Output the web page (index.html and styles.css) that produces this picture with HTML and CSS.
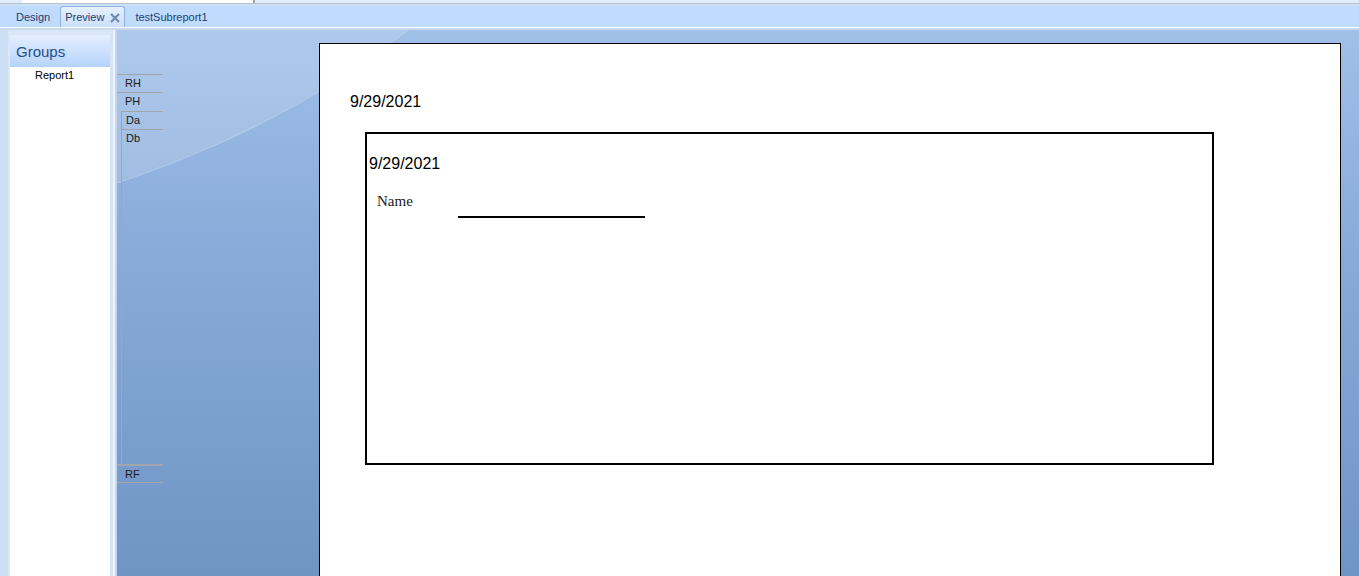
FILE: index.html
```html
<!DOCTYPE html>
<html lang="en">
  <head>
    <meta charset="UTF-8" />
    <title>Report Preview</title>
    <link rel="stylesheet" href="styles.css">
  </head>
  <body>
    <div class="topstrip">
      <div class="topstrip-tab"></div>
    </div>
    <div class="tabbar">
      <div class="tab">Design</div>
      <div class="tab active">
        Preview
        <svg class="tab-close" width="10" height="10" viewBox="0 0 10 10">
          <path d="M1 1 L9 9 M9 1 L1 9" stroke="#6a88b0" stroke-width="2" />
        </svg>
      </div>
      <div class="tab">testSubreport1</div>
    </div>

    <div class="main">
      <div class="gutter"></div>

      <!-- Groups panel -->
      <div class="groups">
        <div class="groups-header">Groups</div>
        <div class="groups-list">
          <div class="group-item">Report1</div>
        </div>
      </div>

      <div class="splitter"></div>

      <!-- Preview canvas -->
      <div class="canvas">
        <div class="swoosh"></div>

        <div class="ruler">
          <div class="band rh">RH</div>
          <div class="band ph">PH</div>
          <div class="band-group">
            <div class="band da">Da</div>
            <div class="band db">Db</div>
          </div>
          <div class="band rf">RF</div>
        </div>

        <div class="page">
          <div class="page-date">9/29/2021</div>
          <div class="subreport">
            <div class="sub-date">9/29/2021</div>
            <div class="field-row">
              <div class="field-label">Name</div>
              <div class="field-line"></div>
            </div>
          </div>
        </div>
      </div>
    </div>
  </body>
</html>
```

FILE: styles.css
```css
html,
body {
  margin: 0;
  height: 100%;
  overflow: hidden;
}

body {
  font-family: "Liberation Sans", Arial, sans-serif;
  background-color: #cddff4;
  display: flex;
  flex-direction: column;
}

/* Top strip */
.topstrip {
  height: 3px;
  background-color: #e2ecf8;
  border-bottom: 1px solid #b6c2d1;
  position: relative;
}

.topstrip-tab {
  position: absolute;
  left: 22px;
  top: 0;
  width: 231px;
  height: 3px;
  background-color: #ffffff;
  border-right: 2px solid #9aa6b6;
}

/* Tab bar */
.tabbar {
  height: 21px;
  margin-top: 2px;
  background-color: #bfdbfd;
  border-bottom: 1px solid #ffffff;
  display: flex;
  align-items: flex-end;
  padding-left: 8px;
  font-size: 11px;
  color: #1b3f76;
}

.tab {
  height: 20px;
  line-height: 20px;
  padding: 0 8px;
  margin-right: 2px;
}

.tab.active {
  display: flex;
  align-items: center;
  gap: 6px;
  padding: 0 4px 0 4px;
  height: 20px;
  background: linear-gradient(#e6f0fd, #cbe0fa);
  border: 1px solid #8fb3e0;
  border-bottom: none;
  border-radius: 3px 3px 0 0;
  margin-right: 2px;
  line-height: 19px;
}

.tab-close {
  margin-top: 1px;
}

/* Main area */
.main {
  flex: 1;
  display: flex;
  border-top: 2px solid #c9daee;
  min-height: 0;
}

.gutter {
  width: 8px;
  background-color: #cddff4;
  border-right: 2px solid #dbe7f6;
}

.groups {
  width: 100px;
  display: flex;
  flex-direction: column;
  padding-top: 5px;
  background-color: #dbe7f6;
}

.groups-header {
  height: 32px;
  background: linear-gradient(#e4efff, #b5d3fa);
  color: #1d4d8e;
  font-size: 15px;
  line-height: 34px;
  padding-left: 6px;
  box-sizing: border-box;
}

.groups-list {
  flex: 1;
  background-color: #ffffff;
  padding-top: 1px;
}

.group-item {
  font-size: 11px;
  padding-left: 25px;
  line-height: 14px;
  color: #000000;
}

.splitter {
  width: 7px;
  background: linear-gradient(90deg, #d6e4f7 0, #d6e4f7 3px, #eef4fc 3px, #eef4fc 5px, #c3d6ee 5px);
}

/* Canvas */
.canvas {
  flex: 1;
  position: relative;
  overflow: hidden;
  display: flex;
  align-items: flex-start;
  background: linear-gradient(#a0c0e8, #89abd9 40%, #6f95c5);
}

.swoosh {
  position: absolute;
  left: -1300px;
  top: -985px;
  width: 1800px;
  height: 1200px;
  border-radius: 50%;
  background-color: rgba(255, 255, 255, 0.15);
  border-bottom: 1px solid rgba(255, 255, 255, 0.25);
}

.ruler {
  position: relative;
  width: 46px;
  margin-top: 44px;
  font-size: 11px;
  color: #1a1a1a;
}

.band {
  border-top: 1px solid #a2a5ab;
  height: 17px;
  line-height: 17px;
  padding-left: 8px;
}

.ph {
  height: 18px;
}

.band-group {
  margin-left: 4px;
  border-left: 1px solid #a2a5ab;
}

.band-group .band {
  padding-left: 4px;
}

.db {
  height: 334px;
}

.rf {
  border-top: 2px solid #a2a5ab;
  border-bottom: 1px solid #a2a5ab;
  height: 16px;
}

/* Page */
.page {
  position: relative;
  margin-left: 156px;
  margin-top: 13px;
  width: 1022px;
  height: 560px;
  background-color: #ffffff;
  border: 1px solid #000000;
  padding-left: 30px;
  box-sizing: border-box;
}

.page-date {
  font-size: 16px;
  line-height: 18px;
  margin-top: 49px;
  color: #000000;
}

.subreport {
  margin-top: 21px;
  margin-left: 15px;
  width: 849px;
  height: 333px;
  border: 2px solid #000000;
  box-sizing: border-box;
  padding-left: 2px;
}

.sub-date {
  font-size: 16px;
  line-height: 18px;
  margin-top: 21px;
}

.field-row {
  display: flex;
  align-items: flex-start;
  margin-top: 20px;
  margin-left: 8px;
}

.field-label {
  font-family: "Liberation Serif", "Times New Roman", serif;
  font-size: 15px;
  line-height: 17px;
  width: 81px;
  color: #222222;
}

.field-line {
  width: 187px;
  height: 23px;
  border-bottom: 2px solid #000000;
}
```
